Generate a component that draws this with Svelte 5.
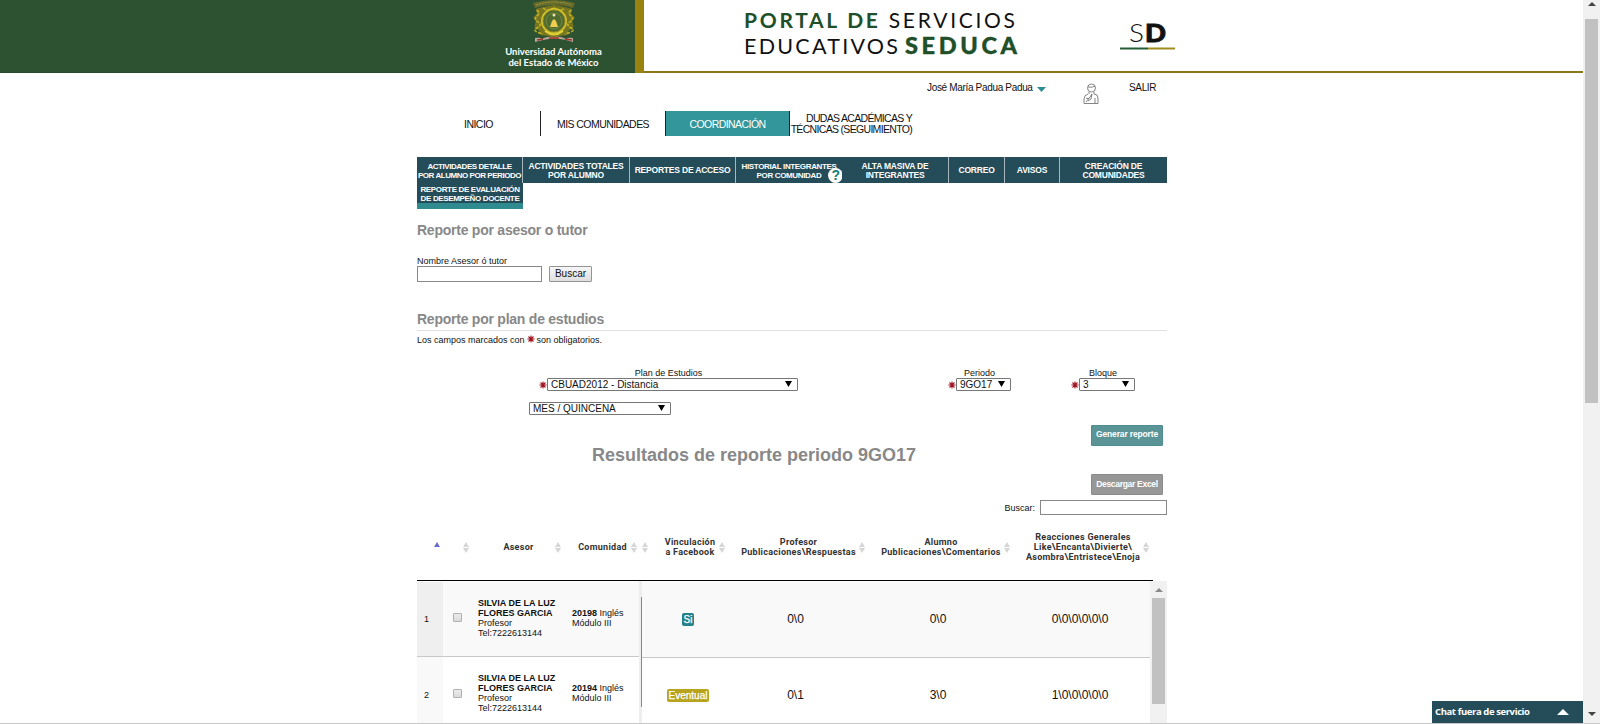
<script>
  const tabs = [
    { lines: ['ACTIVIDADES DETALLE', 'POR ALUMNO POR PERIODO'], small: true },
    { lines: ['ACTIVIDADES TOTALES', 'POR ALUMNO'] },
    { lines: ['REPORTES DE ACCESO'] },
    { lines: ['HISTORIAL INTEGRANTES', 'POR COMUNIDAD'], small: true, help: true },
    { lines: ['ALTA MASIVA DE', 'INTEGRANTES'] },
    { lines: ['CORREO'] },
    { lines: ['AVISOS'] },
    { lines: ['CREACIÓN DE', 'COMUNIDADES'] }
  ];
  const heads = [
    ['Vinculación', 'a Facebook'],
    ['Profesor', 'Publicaciones\\Respuestas'],
    ['Alumno', 'Publicaciones\\Comentarios'],
    ['Reacciones Generales', 'Like\\Encanta\\Divierte\\', 'Asombra\\Entristece\\Enoja']
  ];
  const rows = [
    { n: 1, id: '20198', fb: 'Si', prof: '0\\0', alum: '0\\0', reac: '0\\0\\0\\0\\0\\0' },
    { n: 2, id: '20194', fb: 'Eventual', prof: '0\\1', alum: '3\\0', reac: '1\\0\\0\\0\\0\\0' }
  ];
</script>

{#snippet star()}
  <svg class="star" viewBox="0 0 8 8"><path d="M4 .4v7.2M.4 4h7.2M1.5 1.5l5 5M6.500 1.500l-5 5" stroke="#a01522" stroke-width="1.100" /></svg>
{/snippet}
{#snippet sort()}
  <svg class="sort" viewBox="0 0 6 11"><path d="M3 0 6 5H0zM3 11 0 6h6z" fill="#d6d6d6" /></svg>
{/snippet}
{#snippet select(text, cls)}
  <div class="select {cls}"><span>{text}</span><svg viewBox="0 0 7 6"><path d="M0 0h7L3.5 6z" /></svg></div>
{/snippet}

<div class="screen">
  <div class="page">
    <header>
      <div class="brand">
        <svg class="crest" viewBox="0 0 48 43">
          <path d="M3 3Q24-3 45 3l-2 5Q24 2 5 8z" fill="#666b2c" />
          <path d="M6 5Q24-1 42 5" fill="none" stroke="#a39a3c" stroke-width="1" stroke-dasharray="2 1" />
          <g transform="translate(24 0) scale(1.22 1) translate(-24 0)">
            <path d="m9 9 6-2 9-2 9 2 6 2-1 5 3 3-2 4 1 6-4 4-1 4-6 1-5 3-5-3-6-1-1-4-4-4 1-6-2-4 3-3z" fill="#77751f" />
            <path d="M10 10q3 3 0 6t1 6-1 6 5 6M38 10q-3 3 0 6t-1 6 1 6-5 6M15 8q4 4 9 0 5 4 9 0" fill="none" stroke="#c0b025" stroke-width="1.500" stroke-dasharray="3 1" />
          </g>
          <circle cx="24" cy="21" r="13" fill="#d2c22a" />
          <circle cx="24" cy="21" r="11" fill="#4f6b2f" stroke="#8f8722" />
          <circle cx="24" cy="21" r="8" fill="none" stroke="#7c8b3c" stroke-width=".8" />
          <circle cx="24" cy="15" r="1.500" fill="#e9e4b0" />
          <path d="m20 27 2-6 2-2 2 2 2 6z" fill="#efcc4e" />
          <path d="M15 31q9 7 18 0" fill="none" stroke="#ded03a" stroke-width="2" />
          <path d="M5 38q5-1 7 1 5-3 12-2 7-1 12 2 3-2 7-1v4l-7-2q-12-3-23 0l-8 2z" fill="#b9a899" />
          <path d="m7 40 6-1M35 39l7 1M19 38h10" stroke="#9d3328" stroke-width="1.500" />
        </svg>
        <div>Universidad Autónoma</div>
        <div>del Estado de México</div>
      </div>
      <div class="gold"></div>
      <svg class="titles" viewBox="644 0 939 71">
        <g font-family="Lato, sans-serif" fill="#111">
          <text x="744" y="28" font-size="21" textLength="271"><tspan font-weight="700" fill="#204f29">PORTAL DE</tspan> SERVICIOS</text>
          <text x="744" y="54" font-size="21.500" textLength="154">EDUCATIVOS</text>
          <text x="905" y="54" font-size="23.500" font-weight="900" fill="#204f29" stroke="#204f29" stroke-width=".4" textLength="112">SEDUCA</text>
          <text x="1129" y="42" font-size="25" font-weight="300" textLength="15" lengthAdjust="spacingAndGlyphs">S</text>
          <text x="1145" y="42" font-size="25" font-weight="900" stroke="#111" stroke-width=".9" textLength="21" lengthAdjust="spacingAndGlyphs">D</text>
        </g>
        <path d="M1120 48.5h28" stroke="#245b35" stroke-width="2" /><path d="M1148 48.5h27" stroke="#a08d20" stroke-width="2" />
      </svg>
    </header>

    <main>
      <div class="user">
        <span class="name">José María Padua Padua</span>
        <svg class="caret" viewBox="0 0 9 5"><path d="M0 0h9L4.500 5z" fill="#2d8d94" /></svg>
        <svg class="person" viewBox="0 0 16 21" fill="none" stroke="#666" stroke-width=".8">
          <circle cx="8.500" cy="5" r="4" /><path d="M5 4q4 1 7-1M6 9v2M11 9v2q4 0 4 4v5.500H1V16q0-4 4-5M3 19l4-5 2-3-1 5-3 2M12 15v5M3 15l3 1" />
        </svg>
        <span class="exit">SALIR</span>
      </div>

      <nav class="main-nav">
        <span>INICIO</span>
        <span>MIS COMUNIDADES</span>
        <span class="on">COORDINACIÓN</span>
        <span class="two">DUDAS ACADÉMICAS Y<br />TÉCNICAS (SEGUIMIENTO)</span>
      </nav>

      <nav class="tabs">
        {#each tabs as t}
          <div class="tab" class:small={t.small} class:nosep={t.help}>
            {#each t.lines as l}<span>{l}</span>{/each}
            {#if t.help}<b class="help">?</b>{/if}
          </div>
        {/each}
      </nav>
      <div class="tab small active"><span>REPORTE DE EVALUACIÓN</span><span>DE DESEMPEÑO DOCENTE</span></div>

      <h2 class="first">Reporte por asesor o tutor</h2>
      <div class="label">Nombre Asesor ó tutor</div>
      <div class="search"><div class="input"></div><div class="button">Buscar</div></div>
      <h2 class="second">Reporte por plan de estudios</h2>
      <div class="note">Los campos marcados con {@render star()} son obligatorios.</div>

      <div class="filters">
        <div class="field plan"><span>Plan de Estudios</span><div>{@render star()}{@render select('CBUAD2012 - Distancia', 'w-plan')}</div></div>
        <div class="field period"><span>Periodo</span><div>{@render star()}{@render select('9GO17', 'w-period')}</div></div>
        <div class="field block"><span>Bloque</span><div>{@render star()}{@render select('3', 'w-block')}</div></div>
      </div>
      <div class="month">{@render select('MES / QUINCENA', 'w-month')}</div>

      <div class="results">
        <h1>Resultados de reporte periodo 9GO17</h1>
        <div class="actions">
          <div class="action teal">Generar reporte</div>
          <div class="action gray">Descargar Excel</div>
        </div>
      </div>
      <div class="filter"><span>Buscar:</span><div class="input"></div></div>

      <div class="thead">
        <div><svg class="asc" viewBox="0 0 6 5"><path d="M3 0 6 5H0z" fill="#6a6acb" /></svg></div>
        <div>{@render sort()}</div>
        <div><p>Asesor</p>{@render sort()}</div>
        <div><p>Comunidad</p>{@render sort()}</div>
        <div>{@render sort()}</div>
        {#each heads as h}
          <div><p>{#each h as l}<span>{l}</span>{/each}</p>{@render sort()}</div>
        {/each}
      </div>

      <div class="tbody">
        <div class="fixed">
          {#each rows as r}
            <div class="row">
              <div class="num">{r.n}</div>
              <div class="box"><i></i></div>
              <div class="who"><b>SILVIA DE LA LUZ</b><b>FLORES GARCIA</b><span>Profesor</span><span>Tel:7222613144</span></div>
              <div class="com"><span><b>{r.id}</b> Inglés</span><span>Módulo III</span></div>
            </div>
          {/each}
        </div>
        <div class="divider"><i></i></div>
        <div class="data">
          {#each rows as r}
            <div class="row">
              <div><em class:eventual={r.n === 2}>{r.fb}</em></div>
              <div>{r.prof}</div>
              <div>{r.alum}</div>
              <div>{r.reac}</div>
            </div>
          {/each}
        </div>
        <div class="scroll inner">
          <svg viewBox="0 0 8 4"><path d="M4 0 8 4H0z" fill="#8b8b8b" /></svg>
          <div class="thumb"></div>
        </div>
      </div>
    </main>
  </div>

  <div class="scroll outer">
    <svg viewBox="0 0 8 4"><path d="M4 0 8 4H0z" fill="#444" /></svg>
    <div class="thumb"></div>
    <svg class="down" viewBox="0 0 8 4"><path d="M0 0h8L4 4z" fill="#444" /></svg>
  </div>
  <div class="chat"><span>Chat fuera de servicio</span><svg viewBox="0 0 12 6"><path d="M6 0 12 6H0z" fill="#fff" /></svg></div>
</div>

<style>
  :global(body) { margin: 0; background: #fff; }
  .screen { position: relative; display: flex; width: 1600px; height: 724px; overflow: hidden; box-sizing: border-box; border-bottom: 1px solid #c9c9c9; font: 9px/10px "Liberation Sans", Arial, sans-serif; color: #111; }
  .screen * { box-sizing: border-box; white-space: nowrap; }
  svg { display: block; flex: none; }
  p, h1, h2 { margin: 0; }
  .page { width: 1583px; }
  header { display: flex; height: 73px; border-bottom: 2px solid #8b7715; background: #fff; }
  .brand { width: 635px; height: 73px; padding-left: 472px; background: #2d5232; border-bottom: 1px solid #234a29; display: flex; flex-direction: column; align-items: center; font: 700 9.500px/11px Lato, sans-serif; color: #fff; }
  .crest { width: 48px; height: 43px; margin-bottom: 3px; }
  .gold { width: 9px; height: 73px; background: #98830f; }
  .titles { width: 939px; height: 71px; }
  main { width: 750px; margin-left: 417px; }
  .user { display: flex; height: 38px; padding: 10px 0 0 510px; font-size: 10px; }
  .name { width: 107px; margin-top: -1px; line-height: 11px; letter-spacing: -.33px; }
  .caret { width: 9px; height: 5px; margin: 4px 0 0 3px; }
  .person { width: 16px; height: 21px; margin-left: 37px; }
  .exit { margin: -1px 0 0 30px; line-height: 11px; letter-spacing: -.35px; }
  .main-nav { display: grid; grid-template: 25px / 124px 125px 124px 125px; align-items: start; font-size: 10.500px; letter-spacing: -.55px; text-align: center; }
  .main-nav span { height: 25px; line-height: 26px; border-right: 1px solid #222; }
  .main-nav .on { background: #33969b; color: #fff; }
  .main-nav .two { border: 0; line-height: 11px; padding: 2px 3px 0 0; text-align: right; height: 31px; letter-spacing: -.68px; }
  .tabs { display: grid; grid-template-columns: 106px 107px 106px 106px 107px 56px 55px 107px; height: 26px; margin-top: 21px; }
  .tab { position: relative; display: flex; flex-direction: column; align-items: center; justify-content: center; padding-top: 1px; background: #244c59; border-right: 1px solid #a7b7bd; color: #fff; font-size: 8.500px; line-height: 9px; font-weight: 700; letter-spacing: -.2px; }
  .tab:last-child, .nosep { border-right: 0; }
  .tab.small { font-size: 8px; letter-spacing: -.35px; }
  .tabs .small:first-child { letter-spacing: -.45px; }
  .help { position: absolute; left: 92px; top: 11px; width: 15px; height: 15px; border-radius: 50%; background: #fff; color: #168075; font-size: 14px; line-height: 15px; text-align: center; }
  .active { width: 106px; height: 26px; border-right: 0; border-bottom: 6px solid #2f8b90; }
  h2 { font-size: 14px; line-height: 16px; color: #888; letter-spacing: -.24px; }
  .first { margin-top: 13px; }
  .label { margin-top: 18px; }
  .search { display: flex; gap: 7px; }
  .input { width: 125px; height: 16px; border: 1px solid #888; background: #fff; }
  .button { width: 43px; height: 16px; border: 1px solid #949494; border-radius: 1px; background: linear-gradient(#f6f6f6, #dedede); text-align: center; font-size: 10px; line-height: 14px; }
  .second { height: 20px; margin-top: 29px; border-bottom: 1px solid #e1e1e1; }
  .note { display: flex; gap: 2px; padding-top: 4px; }
  .star { width: 8px; height: 8px; }
  .filters { display: flex; height: 25px; margin-top: 23px; }
  .field { display: flex; flex-direction: column; align-items: center; }
  .field > div { display: flex; }
  .field .star { margin-top: 3px; }
  .plan { width: 259px; margin-left: 122px; }
  .period { width: 63px; margin-left: 150px; }
  .block { width: 64px; margin-left: 60px; }
  .select { display: flex; justify-content: space-between; height: 13px; border: 1px solid #777; border-radius: 1px; padding: 0 5px 0 3px; font-size: 10px; line-height: 11px; }
  .select svg { width: 7px; height: 6px; margin-top: 2px; }
  .w-plan { width: 251px; } .w-period { width: 55px; } .w-block { width: 56px; } .w-month { width: 142px; }
  .month { margin: 9px 0 0 112px; }
  .results { display: flex; justify-content: space-between; height: 85px; padding: 10px 4px 0 175px; }
  h1 { margin-top: 20px; font-size: 18px; line-height: 20px; color: #888; }
  .action { width: 72px; height: 21px; border: 1px solid; border-radius: 1px; color: #fff; font-size: 8.500px; font-weight: 700; letter-spacing: -.15px; text-align: center; }
  .teal { background: #5a9497; border-color: #4d8c90; line-height: 17px; }
  .gray { margin-top: 28px; background: #979797; border-color: #8b8b8b; line-height: 19px; letter-spacing: -.3px; }
  .filter { display: flex; justify-content: flex-end; height: 16px; gap: 5px; }
  .filter span { margin-top: 3px; }
  .filter .input { width: 127px; height: 15px; margin: 0; }
  .thead { display: grid; grid-template-columns: 23px 29px 92px 76px 11px 77px 140px 145px 139px; height: 65px; width: 736px; border-bottom: 1px solid #000; font: 700 9px/10px Roboto, sans-serif; color: #333; letter-spacing: .28px; }
  .thead > div { display: flex; align-items: center; justify-content: flex-end; height: 65px; padding-bottom: 4px; }
  .thead p { flex: 1; text-align: center; padding-left: 13px; }
  .thead p span { display: block; }
  .thead > div:first-child { padding-bottom: 8px; }
  .asc, .sort { width: 6px; height: 11px; }
  .sort { margin-top: 2px; }
  .asc { height: 5px; }
  .tbody { display: flex; height: 143px; overflow: hidden; }
  .fixed { width: 222px; padding-top: 1px; }
  .row { display: grid; height: 76px; border-bottom: 1px solid #c9c9c9; }
  .row:first-child { background: #f9f9f9; }
  .fixed .row { grid-template-columns: 26px 26px 93px 77px; align-items: center; height: 75px; }
  .fixed .row + .row { grid-template-rows: 76px; height: 77px; border: 0; }
  .num { align-self: stretch; background: #f9f9f9; display: flex; align-items: center; padding: 0 0 1px 7px; }
  .row:first-child .num { background: #efefef; }
  .box { padding: 0 0 4px 10px; }
  .box i { display: block; width: 9px; height: 9px; border: 1px solid #b0b0b0; border-radius: 1px; background: linear-gradient(#ececec, #dadada); }
  .who, .com { display: flex; flex-direction: column; padding: 0 0 2px 10px; }
  .who { padding-left: 9px; }
  .row + .row .who, .row + .row .com { padding-bottom: 4px; }
  .divider { width: 3px; background: #eee; padding: 16px 0 0 2px; }
  .divider i { display: block; width: 1px; height: 110px; background: #888; }
  .data { width: 508px; padding-top: 1px; }
  .data .row { grid-template-columns: 92px 123px 162px 122px; text-align: center; align-items: center; padding-bottom: 2px; font-size: 12px; line-height: 14px; }
  em { display: inline-block; padding: 0 2px; border-radius: 2px; background: #258087; color: #fff; font-style: normal; font-size: 10px; line-height: 13px; -webkit-text-stroke: .25px #fff; }
  .eventual { background: #b8a31d; }
  .scroll { background: #f1f1f1; display: flex; flex-direction: column; align-items: center; }
  .scroll svg { width: 8px; height: 4px; }
  .thumb { width: 13px; background: #c1c1c1; }
  .inner { width: 17px; padding-top: 7px; }
  .inner .thumb { height: 106px; margin-top: 6px; }
  .outer { width: 17px; height: 724px; padding-top: 2px; }
  .outer .thumb { height: 384px; margin-top: 13px; }
  .outer .down { margin-top: 309px; }
  .chat { position: absolute; left: 1432px; top: 701px; width: 151px; height: 22px; display: flex; justify-content: space-between; align-items: center; padding: 0 14px 0 3px; background: #244c59; color: #fff; font: 700 9.500px/12px "Open Sans", sans-serif; letter-spacing: -.4px; }
  .chat svg { width: 12px; height: 6px; }
</style>
